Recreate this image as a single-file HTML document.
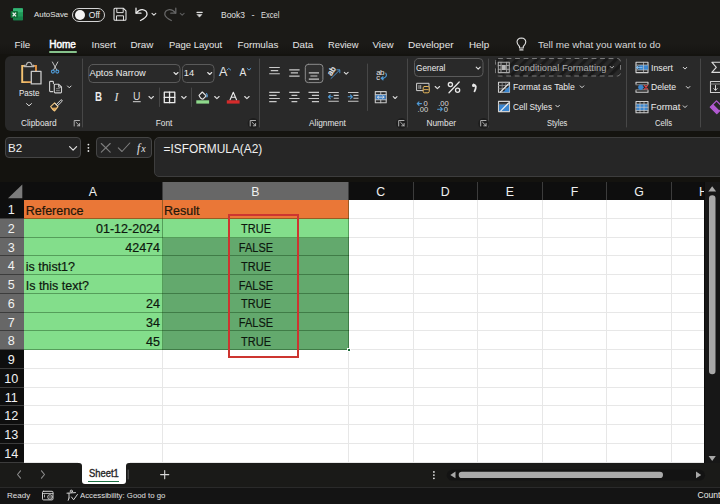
<!DOCTYPE html>
<html><head><meta charset="utf-8">
<style>
*{margin:0;padding:0;box-sizing:border-box}
html,body{width:720px;height:504px;overflow:hidden}
body{background:#14130f;font-family:"Liberation Sans",sans-serif;color:#e8e8e8;position:relative}
.a{position:absolute}
.t{position:absolute;line-height:1;white-space:nowrap}
#ribbon{position:absolute;left:5px;top:56px;width:730px;height:75px;background:#292929;border-radius:6px}
.sep{position:absolute;width:1px;background:#454545}
.lbl{position:absolute;line-height:1;white-space:nowrap;font-size:8.3px;color:#e6e6e6}
.rt{position:absolute;line-height:1;white-space:nowrap;font-size:9.3px;color:#ececec}
#grid{position:absolute;left:24px;top:200px;width:680px;height:263.5px;background:#fff;overflow:hidden}
.hdr{position:absolute;top:181.5px;height:18.5px;background:#0e0e0e}
.ch{position:absolute;top:0;height:18.5px;border-right:1px solid #3c3c3c;color:#f0f0f0;font-size:12.3px;text-align:center;line-height:21.2px;overflow:hidden}
.rh{position:absolute;left:0;width:24px;height:18.75px;color:#f2f2f2;font-size:12.6px;text-align:center;line-height:21.5px;background:#0e0e0e;border-bottom:1px solid #3c3c3c;padding-right:1.4px;overflow:hidden}
.cell{position:absolute;height:18.75px;font-size:12.6px;line-height:19px;color:#111;white-space:nowrap;overflow:hidden}
svg{position:absolute;overflow:visible}
.ct{font-size:12.5px;color:#0d170e;-webkit-text-stroke:0.2px #0d170e}
</style></head><body>

<!-- TITLE BAR -->
<div class="a" style="left:0;top:0;width:720px;height:54px;background:linear-gradient(#1b1a17 0,#1b1a17 44px,#161512 54px)"></div>
<svg style="left:0;top:0" width="30" height="30" viewBox="0 0 30 30">
<rect x="13" y="8.2" width="10" height="12" rx="1" fill="#1f9a58"/>
<rect x="13" y="8.2" width="10" height="4" rx="1" fill="#33b474"/>
<rect x="13" y="16.5" width="10" height="3.7" fill="#17824a"/>
<rect x="10.6" y="11" width="7.4" height="6.9" rx="1" fill="#0f7038"/>
<path d="M12.6 12.6L16 16.4M16 12.6L12.6 16.4" stroke="#f2f2f2" stroke-width="1.3"/>
</svg>
<div class="t" style="left:34px;top:11.3px;font-size:7.9px;color:#e6e6e6">AutoSave</div>
<div class="a" style="left:72px;top:7.5px;width:33px;height:14.5px;border:1.4px solid #d4d4d4;border-radius:8px;background:#1b1a17"></div>
<div class="a" style="left:74.5px;top:9.5px;width:10.5px;height:10.5px;border-radius:50%;background:#f4f4f4"></div>
<div class="t" style="left:88.8px;top:11px;font-size:8.5px;color:#ececec">Off</div>

<div class="t" style="left:221.3px;top:10px;font-size:9.4px;color:#e0e0e0;transform:scaleX(.9);transform-origin:0 0">Book3</div><div class="t" style="left:251.5px;top:10px;font-size:9.4px;color:#e0e0e0">-</div><div class="t" style="left:260.6px;top:10px;font-size:9.4px;color:#e0e0e0;transform:scaleX(.8);transform-origin:0 0">Excel</div>

<!-- TABS -->
<div class="t" style="left:14.5px;top:39.7px;font-size:9.8px;color:#e6e6e6">File</div>
<div class="t" style="left:49.2px;top:39.7px;font-size:10px;color:#fff;-webkit-text-stroke:0.45px #fff">Home</div>
<div class="a" style="left:49px;top:51.3px;width:28px;height:2px;background:#86c28b;border-radius:1px"></div>
<div class="t" style="left:91.5px;top:39.7px;font-size:9.8px;color:#e6e6e6">Insert</div>
<div class="t" style="left:130.5px;top:39.7px;font-size:9.8px;color:#e6e6e6">Draw</div>
<div class="t" style="left:168.5px;top:39.7px;font-size:9.8px;color:#e6e6e6;transform:scaleX(.965);transform-origin:0 0">Page Layout</div>
<div class="t" style="left:237.5px;top:39.7px;font-size:9.8px;color:#e6e6e6">Formulas</div>
<div class="t" style="left:292.5px;top:39.7px;font-size:9.8px;color:#e6e6e6">Data</div>
<div class="t" style="left:327.5px;top:39.7px;font-size:9.8px;color:#e6e6e6;transform:scaleX(.95);transform-origin:0 0">Review</div>
<div class="t" style="left:372.5px;top:39.7px;font-size:9.8px;color:#e6e6e6">View</div>
<div class="t" style="left:407.8px;top:39.7px;font-size:9.8px;color:#e6e6e6;transform:scaleX(1.02);transform-origin:0 0">Developer</div>
<div class="t" style="left:469px;top:39.7px;font-size:9.8px;color:#e6e6e6">Help</div>
<div class="t" style="left:538px;top:39.5px;font-size:9.95px;color:#d8d8d8">Tell me what you want to do</div>

<!-- RIBBON -->
<div id="ribbon"></div>
<!-- RIBBON CONTENT -->
<svg style="left:0;top:0" width="720" height="135" viewBox="0 0 720 135" fill="none" stroke-linecap="round" stroke-linejoin="round">
<!-- separators -->
<g stroke="#474747" stroke-width="1">
<line x1="82.5" y1="59" x2="82.5" y2="127"/>
<line x1="259.5" y1="59" x2="259.5" y2="127"/>
<line x1="159.5" y1="88" x2="159.5" y2="106.5"/>
<line x1="191.5" y1="88" x2="191.5" y2="106.5"/>
<line x1="367.5" y1="64" x2="367.5" y2="110.5"/>
<line x1="407.5" y1="59" x2="407.5" y2="127"/>
<line x1="488.5" y1="59" x2="488.5" y2="127"/>
<line x1="626.5" y1="59" x2="626.5" y2="127"/>
<line x1="700.5" y1="59" x2="700.5" y2="127"/>
</g>
<!-- Paste clipboard -->
<defs><linearGradient id="og" x1="0" y1="0" x2="1" y2="0"><stop offset="0" stop-color="#f4c372"/><stop offset="1" stop-color="#e0903e"/></linearGradient></defs>
<path d="M33 65.9H36V70.3M25 65.9H22.2V82.1H30.6" stroke="url(#og)" stroke-width="1.9" stroke-linecap="square" stroke-linejoin="miter"/>
<path d="M24.4 66.6H33.8V65.2H31.7Q31.4 62.2 29.05 62.2Q26.7 62.2 26.4 65.2H24.4Z" stroke="#b9b9b9" stroke-width="1.1" fill="#292929"/>
<rect x="31.3" y="71.4" width="9.7" height="12.5" stroke="#c8c8c8" stroke-width="1.3"/>
<path d="M26.5 103.6L29 105.8L31.5 103.6" stroke="#dcdcdc" stroke-width="1"/>
<!-- scissors -->
<path d="M52.4 62L56.6 69.8M57.8 62L53.6 69.8" stroke="#d6d6d6" stroke-width="0.9"/>
<circle cx="52.9" cy="71.6" r="1.5" stroke="#4f9ad6" stroke-width="1.1"/>
<circle cx="57.3" cy="71.6" r="1.5" stroke="#4f9ad6" stroke-width="1.1"/>
<!-- copy -->
<path d="M52.8 91.6H50.4Q49.6 91.6 49.6 90.8V82.2Q49.6 81.4 50.4 81.4H52.6Q53.4 81.4 53.4 82.2V83.6" stroke="#d0d0d0" stroke-width="1.1"/>
<path d="M55.1 84.3H58.8L61.5 87V92.1Q61.5 92.9 60.7 92.9H55.1Q54.3 92.9 54.3 92.1V85.1Q54.3 84.3 55.1 84.3Z" stroke="#d0d0d0" stroke-width="1.1"/>
<path d="M58.6 84.5V87.2H61.3" stroke="#d0d0d0" stroke-width="0.9"/>
<path d="M56.4 88.7H59.4M56.4 90.7H59.4" stroke="#a0a0a0" stroke-width="0.8"/>
<path d="M67.5 86L69.3 87.8L71.1 86" stroke="#dcdcdc" stroke-width="1"/>
<!-- format painter -->
<path d="M51.2 107.8L53.3 110.3Q54 111.4 55 110.5L57.6 107.6Z" fill="#d89f52"/>
<path d="M50.6 106.6L54.6 102.9L58 106.6L54.6 111Q52.3 109.7 50.6 106.6Z" stroke="#f0c47c" stroke-width="1.1"/>
<path d="M55.4 103.6L57.3 105.5M56.4 104.5L60.6 100.2Q61.4 99.5 62 100.1Q62.6 100.8 61.9 101.5L57.6 105.7" stroke="#e0e0e0" stroke-width="1"/>
<!-- dialog launchers -->
<circle cx="253.1" cy="123.4" r="5.4" fill="#1d1d1d"/>
<circle cx="401.6" cy="123.4" r="5.4" fill="#1d1d1d"/>
<circle cx="483.6" cy="123.4" r="5.4" fill="#1d1d1d"/>
<g stroke="#bdbdbd" stroke-width="0.9">
<path d="M74.2 126V120.5H79.5M76 122.2L79.6 125.8M79.6 123.5V125.8H77.3"/>
<path d="M250.2 126V120.5H255.5M252 122.2L255.6 125.8M255.6 123.5V125.8H253.3"/>
<path d="M398.7 126V120.5H404M400.5 122.2L404.1 125.8M404.1 123.5V125.8H401.8"/>
<path d="M480.7 126V120.5H486M482.5 122.2L486.1 125.8M486.1 123.5V125.8H483.8"/>
</g>
<!-- font boxes -->
<rect x="88.8" y="64.5" width="91.2" height="18" rx="4" stroke="#5a5a5a" stroke-width="1"/>
<rect x="182.5" y="64.5" width="31.5" height="18" rx="4" stroke="#5a5a5a" stroke-width="1"/>
<path d="M174 72.5L176 74.5L178 72.5M207.7 72.5L209.7 74.5L211.7 72.5" stroke="#e0e0e0" stroke-width="1.1"/>
<path d="M227 70L228.8 68.4L230.6 70" stroke="#5a9fd8" stroke-width="1"/>
<path d="M247.2 68.5L249 70.1L250.8 68.5" stroke="#5a9fd8" stroke-width="1"/>
<!-- B I U chevron -->
<path d="M149 96.5L151.2 98.7L153.4 96.5M181.7 96.5L183.9 98.7L186.1 96.5M214.7 96.5L216.9 98.7L219.1 96.5M244.7 96.5L246.9 98.7L249.1 96.5" stroke="#dcdcdc" stroke-width="1.1"/>
<path d="M133.3 101.7H140.3" stroke="#d8d8d8" stroke-width="1"/>
<!-- borders -->
<rect x="164.3" y="92.2" width="10.5" height="10.5" stroke="#ececec" stroke-width="1.3"/>
<path d="M169.55 92.2V102.7M164.3 97.45H174.8" stroke="#ececec" stroke-width="1.3"/>
<!-- fill -->
<path d="M199 95.3L202.3 92L206.2 95.9L203 99.2Q200.5 99.2 199 95.3Z" stroke="#e6e6e6" stroke-width="1.1"/>
<path d="M206.5 93.5Q208 96 206.8 97" stroke="#5a9fd8" stroke-width="1.1"/>
<rect x="196.3" y="100.3" width="12.8" height="3.3" fill="#8fd98c"/>
<!-- font color -->
<path d="M230 100L233.3 92.2L236.6 100M231.3 97.2H235.3" stroke="#ececec" stroke-width="1.1"/>
<rect x="226.8" y="100.3" width="12.8" height="3.3" fill="#d52b2b"/>
<!-- alignment row1 -->
<g stroke="#c9c9c9" stroke-width="1.15" stroke-linecap="butt">
<path d="M269.2 67.5H279.8M270.8 70.6H278.2M269.2 73.7H279.8"/>
<path d="M289.2 69.8H299.6M290.8 72.9H298M289.2 76.1H299.6"/>
<path d="M308.8 72.9H319M310.4 76H317.4M308.8 79.1H319"/>
<path d="M269.2 92.3H279.8M269.2 95.4H276.6M269.2 98.5H279.8M269.2 101.6H276.6"/>
<path d="M289.2 92.3H299.6M291.5 95.4H297.3M289.2 98.5H299.6M291.5 101.6H297.3"/>
<path d="M308.5 92.3H319M311.9 95.4H319M308.5 98.5H319M311.9 101.6H319"/>
<path d="M328.3 92.5H338.8M333.7 95.3H338.8M333.7 98.2H338.8M328.3 101.2H338.8"/>
<path d="M348 92.5H358.5M353.4 95.3H358.5M353.4 98.2H358.5M348 101.2H358.5"/>
</g>
<rect x="305.3" y="64.3" width="17.6" height="18.3" rx="3" stroke="#8c8c8c" stroke-width="1" fill="#2f2f2f"/>
<g stroke="#c9c9c9" stroke-width="1.15" stroke-linecap="butt"><path d="M308.8 72.9H319M310.4 76H317.4M308.8 79.1H319"/></g>
<path d="M332.5 96.8H328.6M330.3 95L328.4 96.8L330.3 98.6" stroke="#4f9ad6" stroke-width="1.1"/>
<path d="M348.2 96.8H352.2M350.5 95L352.4 96.8L350.5 98.6" stroke="#4f9ad6" stroke-width="1.1"/>
<!-- orientation -->
<text x="0" y="0" transform="translate(331.3 76.3) rotate(-57)" font-family="Liberation Sans" font-size="8" fill="#f0f0f0" stroke="#f0f0f0" stroke-width="0.25">ab</text>
<path d="M331 78.5L339.5 70.2M336.8 69.8H339.8V72.8" stroke="#4f9ad6" stroke-width="0.9"/>
<path d="M344.3 72.3L346.2 74.2L348.1 72.3M393.2 96.6L395.1 98.5L397 96.6" stroke="#dcdcdc" stroke-width="1.1"/>
<!-- wrap text -->
<text x="376.2" y="74.5" font-family="Liberation Sans" font-size="8" fill="#e4e4e4" letter-spacing="-0.6">ab</text>
<text x="376.3" y="79.6" font-family="Liberation Sans" font-size="7.5" fill="#e4e4e4">c</text>
<path d="M385.8 73.2Q387.8 76.5 383.5 78.3H381.3M383 76.8L381.2 78.3L383 79.8" stroke="#4f9ad6" stroke-width="1.2"/>
<!-- merge -->
<rect x="375.3" y="91.6" width="10.9" height="11.2" stroke="#c9c9c9" stroke-width="1.1"/>
<rect x="375.8" y="94.6" width="9.9" height="5.2" fill="#3b7dc4"/>
<path d="M375.3 94.6H386.2M375.3 99.8H386.2M380.75 91.6V94.6M380.75 99.8V102.8" stroke="#c9c9c9" stroke-width="0.9"/>
<path d="M377.5 97.2H384M378.8 96L377.5 97.2L378.8 98.4M382.7 96L384 97.2L382.7 98.4" stroke="#e8e8e8" stroke-width="0.8"/>
<!-- number box -->
<rect x="414.5" y="58.5" width="68.5" height="18" rx="4" stroke="#5a5a5a" stroke-width="1"/>
<path d="M476.2 67.2L478.2 69.2L480.2 67.2" stroke="#e0e0e0" stroke-width="1.1"/>
<!-- accounting -->
<rect x="417" y="83.3" width="12" height="7.3" stroke="#d0d0d0" stroke-width="1"/>
<rect x="423.2" y="86.5" width="6" height="6.3" rx="1.3" fill="#292929" stroke="#e9b85a" stroke-width="1"/>
<path d="M424.3 89.6H428.2" stroke="#e9b85a" stroke-width="0.9"/>
<path d="M419 85.5V88.5M420.7 85.5V88.5" stroke="#d0d0d0" stroke-width="0.8"/>
<path d="M435.2 86.5L437.4 88.7L439.6 86.5" stroke="#dcdcdc" stroke-width="1.1"/>
<!-- percent -->
<circle cx="450.4" cy="84.6" r="2.1" stroke="#e6e6e6" stroke-width="1.3"/>
<circle cx="457.6" cy="90.3" r="2.1" stroke="#e6e6e6" stroke-width="1.3"/>
<path d="M449 92.8L459.2 82" stroke="#e6e6e6" stroke-width="1.3"/>
<path d="M473.8 84.5Q477.5 85.5 474.5 91.3" stroke="#e6e6e6" stroke-width="1.8"/>
<circle cx="473.6" cy="85.4" r="1.6" fill="#e6e6e6"/>
<!-- inc/dec decimal -->
<path d="M421.5 103.6H417.3M419 101.8L417.2 103.6L419 105.4" stroke="#4f9ad6" stroke-width="1.1"/>
<path d="M437.6 109.2H442.2M440.6 107.5L442.3 109.2L440.6 110.9" stroke="#4f9ad6" stroke-width="1.1"/>
<text x="423.6" y="106.2" font-family="Liberation Sans" font-size="7.6" fill="#dadada">0</text>
<text x="417.6" y="112.2" font-family="Liberation Sans" font-size="7.6" fill="#dadada">.00</text>
<text x="438.2" y="106.2" font-family="Liberation Sans" font-size="7.6" fill="#dadada">.00</text>
<text x="443.8" y="112.2" font-family="Liberation Sans" font-size="7.6" fill="#dadada">0</text>
</svg>
<svg style="left:0;top:0" width="720" height="135" viewBox="0 0 720 135" fill="none" stroke-linecap="round" stroke-linejoin="round">
<defs>
<pattern id="hatch" patternUnits="userSpaceOnUse" width="7" height="7" patternTransform="rotate(45)">
<rect x="0" y="0" width="3.3" height="7" fill="#191919"/>
</pattern>
</defs>
<!-- conditional formatting -->
<rect x="495.5" y="58.5" width="125" height="17.5" rx="3" fill="url(#hatch)"/>
<rect x="495.5" y="58.5" width="125" height="17.5" rx="3" stroke="#7a7a7a" stroke-width="1" stroke-dasharray="4 4.5"/>
<rect x="498.3" y="62.3" width="11" height="10.3" fill="#2a2a2a" stroke="#a9a9a9" stroke-width="1.1"/>
<path d="M501 62.3V72.6M506.6 62.3V72.6M498.3 65.5H501M498.3 69.3H501M506.6 65.5H509.3M506.6 69.3H509.3" stroke="#a9a9a9" stroke-width="0.9"/>
<rect x="501.8" y="65" width="4" height="5" fill="#b5b5b5"/>
<path d="M610 66.3L611.8 68.1L613.6 66.3" stroke="#a9a9a9" stroke-width="1"/>
<!-- format as table -->
<rect x="498.5" y="82.2" width="11" height="10" stroke="#d0d0d0" stroke-width="1.1"/>
<path d="M498.5 85.5H509.5M498.5 88.8H509.5M502.2 82.2V92.2M505.8 82.2V92.2" stroke="#9a9a9a" stroke-width="0.7"/>
<path d="M503 92.2L509.5 86V92.2Z" fill="#3a86d0"/>
<path d="M500.5 91.8L508.5 83.8" stroke="#eeeeee" stroke-width="1.2"/>
<path d="M580.2 85.9L582 87.7L583.8 85.9" stroke="#dcdcdc" stroke-width="1"/>
<!-- cell styles -->
<rect x="498.5" y="101.4" width="11" height="10.2" stroke="#d0d0d0" stroke-width="1.1"/>
<path d="M499 104.2H509" stroke="#9a9a9a" stroke-width="0.8"/>
<path d="M499.1 104.6H509V111H499.1Z" fill="#3a86d0"/>
<path d="M500.8 110.8L508.5 103" stroke="#eeeeee" stroke-width="1.2"/>
<path d="M555.8 105.3L557.6 107.1L559.4 105.3" stroke="#dcdcdc" stroke-width="1"/>
<!-- insert -->
<rect x="636" y="62.3" width="12" height="10.3" stroke="#d0d0d0" stroke-width="1.1"/>
<rect x="639.2" y="65" width="8.8" height="5" fill="#3a86d0"/>
<path d="M636 65H648M636 70H648M643.5 62.3V72.6" stroke="#c0c0c0" stroke-width="0.7"/>
<path d="M642 67.5H636.5M638.3 65.8L636.5 67.5L638.3 69.2" stroke="#7db8ea" stroke-width="1.1"/>
<path d="M683.2 67.3L685 69.1L686.8 67.3" stroke="#dcdcdc" stroke-width="1"/>
<!-- delete -->
<path d="M636 82.3H648M636 92.3H648M636 82.3V84M636 90.6V92.3M648 82.3V84M648 90.6V92.3" stroke="#d0d0d0" stroke-width="1.1"/>
<path d="M636 84.8H648M636 89.8H648" stroke="#b0b0b0" stroke-width="0.7"/>
<circle cx="640.8" cy="87.3" r="2.4" fill="#3a86d0" stroke="#3a86d0" stroke-width="0.6"/>
<path d="M644.5 85.4L647.5 89.2M647.5 85.4L644.5 89.2" stroke="#e0464a" stroke-width="1.1"/>
<path d="M686.3 86.5L688.1 88.3L689.9 86.5" stroke="#dcdcdc" stroke-width="1"/>
<!-- format -->
<rect x="636" y="101.5" width="12" height="11.3" stroke="#d0d0d0" stroke-width="1.1"/>
<rect x="636.5" y="104" width="11" height="6.5" fill="#3a86d0"/>
<path d="M636 104H648M636 107.3H648M636 110.5H648M640 101.5V112.8M644 101.5V112.8" stroke="#c8c8c8" stroke-width="0.7"/>
<path d="M683.2 105.8L685 107.6L686.8 105.8" stroke="#dcdcdc" stroke-width="1"/>
<!-- sigma -->
<path d="M720 62.2H711.8L716.3 67.3L711.8 72.4H720" stroke="#dcdcdc" stroke-width="1.1"/>
<!-- fill -->
<rect x="710.5" y="81.5" width="12" height="11" stroke="#d0d0d0" stroke-width="1.1"/>
<path d="M710.5 84H722" stroke="#9a9a9a" stroke-width="0.9"/>
<path d="M715.5 85.5V90.2M713.8 88.6L715.5 90.3L717.2 88.6" stroke="#dcdcdc" stroke-width="1"/>
<!-- eraser -->
<path d="M710.3 107.1L716.5 100.9L723 107.4L716.8 113.6Z" stroke="#b25ad2" stroke-width="1.3"/>
<path d="M710.3 107.1L713.2 104.2L719.7 110.7L716.8 113.6Z" fill="#b25ad2"/>
</svg>
<!-- ribbon text -->
<div class="t" style="left:18.6px;top:89.2px;font-size:8.6px;color:#ececec;transform:scaleX(.93);transform-origin:0 0">Paste</div>
<div class="lbl" style="left:21px;top:118.9px">Clipboard</div>
<div class="lbl" style="left:155.8px;top:118.9px">Font</div>
<div class="lbl" style="left:309px;top:118.9px">Alignment</div>
<div class="lbl" style="left:426.5px;top:118.9px">Number</div>
<div class="lbl" style="left:546.8px;top:118.9px;transform:scaleX(.9);transform-origin:0 0">Styles</div>
<div class="lbl" style="left:654.8px;top:118.9px;transform:scaleX(.93);transform-origin:0 0">Cells</div>
<div class="rt" style="left:89.5px;top:69.3px">Aptos Narrow</div>
<div class="rt" style="left:183.8px;top:69.3px">14</div>
<div class="t" style="left:219px;top:66px;font-size:12.5px;color:#e6e6e6">A</div>
<div class="t" style="left:239.5px;top:68.3px;font-size:10.2px;color:#e6e6e6">A</div>
<div class="t" style="left:94.6px;top:90.7px;font-size:12.2px;color:#ececec;font-weight:bold;transform:scaleX(.8);transform-origin:0 0">B</div>
<div class="t" style="left:114.3px;top:90px;font-size:13px;color:#d9d9d9;font-style:italic;font-family:'Liberation Serif',serif">I</div>
<div class="t" style="left:133px;top:91.8px;font-size:10.3px;color:#d9d9d9">U</div>
<div class="rt" style="left:415.8px;top:63.8px;transform:scaleX(.89);transform-origin:0 0">General</div>
<div class="rt" style="left:512.8px;top:63.7px;color:#b0b0b0">Conditional Formatting</div>
<div class="rt" style="left:512.8px;top:83.2px;transform:scaleX(.93);transform-origin:0 0">Format as Table</div>
<div class="rt" style="left:512.8px;top:102.9px;transform:scaleX(.89);transform-origin:0 0">Cell Styles</div>
<div class="rt" style="left:650.8px;top:63.8px;transform:scaleX(.94);transform-origin:0 0">Insert</div>
<div class="rt" style="left:650.8px;top:83.3px;transform:scaleX(.93);transform-origin:0 0">Delete</div>
<div class="rt" style="left:650.8px;top:102.5px">Format</div>


<!-- FORMULA BAR -->
<div class="a" style="left:4.5px;top:137px;width:76px;height:21px;border:1px solid #454545;border-radius:4px;background:#242424"></div>
<div class="t" style="left:8px;top:141.8px;font-size:11.6px;color:#f0f0f0">B2</div>
<div class="a" style="left:96px;top:137px;width:55.5px;height:21px;border:1px solid #454545;border-radius:4px;background:#242424"></div>
<div class="a" style="left:154px;top:137px;width:600px;height:40px;border:1px solid #3d3d3d;border-radius:5px;background:#262626"></div>
<div class="t" style="left:163.5px;top:143.5px;font-size:11.9px;color:#f0f0f0">=ISFORMULA(A2)</div>

<!-- HEADERS -->
<div class="hdr" style="left:0;width:704px">
<div class="ch" style="left:24px;width:138.5px;background:#0e0e0e">A</div>
<div class="ch" style="left:162.5px;width:186.5px;background:#676767">B</div>
<div class="ch" style="left:349px;width:64.5px;background:#0e0e0e">C</div>
<div class="ch" style="left:413.5px;width:64.5px;background:#0e0e0e">D</div>
<div class="ch" style="left:478px;width:64.8px;background:#0e0e0e">E</div>
<div class="ch" style="left:542.8px;width:64.5px;background:#0e0e0e">F</div>
<div class="ch" style="left:607.3px;width:64.4px;background:#0e0e0e">G</div>
<div class="ch" style="left:671.7px;width:64.4px;background:#0e0e0e">H</div>

</div>
<div class="a" style="left:0;top:200px;width:24px;height:263.5px">
<div class="rh" style="top:0.00px;background:#0e0e0e">1</div>
<div class="rh" style="top:18.75px;background:#676767">2</div>
<div class="rh" style="top:37.50px;background:#676767">3</div>
<div class="rh" style="top:56.25px;background:#676767">4</div>
<div class="rh" style="top:75.00px;background:#676767">5</div>
<div class="rh" style="top:93.75px;background:#676767">6</div>
<div class="rh" style="top:112.50px;background:#676767">7</div>
<div class="rh" style="top:131.25px;background:#676767">8</div>
<div class="rh" style="top:150.00px;background:#0e0e0e">9</div>
<div class="rh" style="top:168.75px;background:#0e0e0e">10</div>
<div class="rh" style="top:187.50px;background:#0e0e0e">11</div>
<div class="rh" style="top:206.25px;background:#0e0e0e">12</div>
<div class="rh" style="top:225.00px;background:#0e0e0e">13</div>
<div class="rh" style="top:243.75px;background:#0e0e0e">14</div>
</div>

<!-- GRID -->
<div class="a" style="left:704px;top:181.5px;width:16px;height:306px;background:#171717;border-left:1.5px solid #0c0c0c"></div>
<div id="grid"></div>

<div class="a" style="left:162px;top:200px;width:1px;height:263.5px;background:#e7e7e7"></div>
<div class="a" style="left:348.0px;top:200px;width:1px;height:263.5px;background:#e7e7e7"></div>
<div class="a" style="left:412.5px;top:200px;width:1px;height:263.5px;background:#e7e7e7"></div>
<div class="a" style="left:477.0px;top:200px;width:1px;height:263.5px;background:#e7e7e7"></div>
<div class="a" style="left:541.8px;top:200px;width:1px;height:263.5px;background:#e7e7e7"></div>
<div class="a" style="left:606.3px;top:200px;width:1px;height:263.5px;background:#e7e7e7"></div>
<div class="a" style="left:670.7px;top:200px;width:1px;height:263.5px;background:#e7e7e7"></div>
<div class="a" style="left:735.1px;top:200px;width:1px;height:263.5px;background:#e7e7e7"></div>
<div class="a" style="left:24px;top:217.75px;width:680px;height:1px;background:#e7e7e7"></div>
<div class="a" style="left:24px;top:236.50px;width:680px;height:1px;background:#e7e7e7"></div>
<div class="a" style="left:24px;top:255.25px;width:680px;height:1px;background:#e7e7e7"></div>
<div class="a" style="left:24px;top:274.00px;width:680px;height:1px;background:#e7e7e7"></div>
<div class="a" style="left:24px;top:292.75px;width:680px;height:1px;background:#e7e7e7"></div>
<div class="a" style="left:24px;top:311.50px;width:680px;height:1px;background:#e7e7e7"></div>
<div class="a" style="left:24px;top:330.25px;width:680px;height:1px;background:#e7e7e7"></div>
<div class="a" style="left:24px;top:349.00px;width:680px;height:1px;background:#e7e7e7"></div>
<div class="a" style="left:24px;top:367.75px;width:680px;height:1px;background:#e7e7e7"></div>
<div class="a" style="left:24px;top:386.50px;width:680px;height:1px;background:#e7e7e7"></div>
<div class="a" style="left:24px;top:405.25px;width:680px;height:1px;background:#e7e7e7"></div>
<div class="a" style="left:24px;top:424.00px;width:680px;height:1px;background:#e7e7e7"></div>
<div class="a" style="left:24px;top:442.75px;width:680px;height:1px;background:#e7e7e7"></div>
<div class="a" style="left:24px;top:461.50px;width:680px;height:1px;background:#e7e7e7"></div>
<div class="a" style="left:24px;top:200px;width:325px;height:18.75px;background:#ea7737"></div>
<div class="a" style="left:24px;top:218.75px;width:139px;height:18.75px;background:#83de8b"></div>
<div class="a" style="left:24px;top:237.50px;width:139px;height:18.75px;background:#83de8b"></div>
<div class="a" style="left:24px;top:256.25px;width:139px;height:18.75px;background:#83de8b"></div>
<div class="a" style="left:24px;top:275.00px;width:139px;height:18.75px;background:#83de8b"></div>
<div class="a" style="left:24px;top:293.75px;width:139px;height:18.75px;background:#83de8b"></div>
<div class="a" style="left:24px;top:312.50px;width:139px;height:18.75px;background:#83de8b"></div>
<div class="a" style="left:24px;top:331.25px;width:139px;height:18.75px;background:#83de8b"></div>
<div class="a" style="left:163px;top:218.75px;width:186px;height:18.75px;background:#83de8b"></div>
<div class="a" style="left:163px;top:237.50px;width:186px;height:112.50px;background:#63a96d"></div>
<div class="a" style="left:24px;top:217.75px;width:325px;height:1px;background:rgba(0,40,0,.35)"></div>
<div class="a" style="left:24px;top:236.50px;width:325px;height:1px;background:rgba(0,40,0,.35)"></div>
<div class="a" style="left:24px;top:255.25px;width:325px;height:1px;background:rgba(0,40,0,.35)"></div>
<div class="a" style="left:24px;top:274.00px;width:325px;height:1px;background:rgba(0,40,0,.35)"></div>
<div class="a" style="left:24px;top:292.75px;width:325px;height:1px;background:rgba(0,40,0,.35)"></div>
<div class="a" style="left:24px;top:311.50px;width:325px;height:1px;background:rgba(0,40,0,.35)"></div>
<div class="a" style="left:24px;top:330.25px;width:325px;height:1px;background:rgba(0,40,0,.35)"></div>
<div class="a" style="left:24px;top:349.00px;width:325px;height:1px;background:rgba(0,40,0,.35)"></div>
<div class="a" style="left:162px;top:200px;width:1px;height:150px;background:rgba(0,40,0,.35)"></div>
<div class="a" style="left:348px;top:200px;width:1px;height:150px;background:rgba(0,40,0,.35)"></div>
<div class="t ct" style="left:25.7px;top:204.55px;color:#2b1608">Reference</div>
<div class="t ct" style="left:164px;top:204.55px;color:#2b1608">Result</div>
<div class="t ct" style="right:560px;top:223.30px;">01-12-2024</div>
<div class="t ct" style="right:560px;top:242.05px;">42474</div>
<div class="t ct" style="left:25.7px;top:260.80px;">is thist1?</div>
<div class="t ct" style="left:25.7px;top:279.55px;">Is this text?</div>
<div class="t ct" style="right:560px;top:298.30px;">24</div>
<div class="t ct" style="right:560px;top:317.05px;">34</div>
<div class="t ct" style="right:560px;top:335.80px;">45</div>
<div class="t ct" style="left:205.7px;width:100px;text-align:center;top:223.30px;transform:scaleX(.88)">TRUE</div>
<div class="t ct" style="left:205.7px;width:100px;text-align:center;top:242.05px;transform:scaleX(.88)">FALSE</div>
<div class="t ct" style="left:205.7px;width:100px;text-align:center;top:260.80px;transform:scaleX(.88)">TRUE</div>
<div class="t ct" style="left:205.7px;width:100px;text-align:center;top:279.55px;transform:scaleX(.88)">FALSE</div>
<div class="t ct" style="left:205.7px;width:100px;text-align:center;top:298.30px;transform:scaleX(.88)">TRUE</div>
<div class="t ct" style="left:205.7px;width:100px;text-align:center;top:317.05px;transform:scaleX(.88)">FALSE</div>
<div class="t ct" style="left:205.7px;width:100px;text-align:center;top:335.80px;transform:scaleX(.88)">TRUE</div>
<div class="a" style="left:228.4px;top:213.8px;width:70.4px;height:144.2px;border:2.3px solid #cd3530"></div>
<div class="a" style="left:346.5px;top:347.5px;width:4px;height:4px;background:#1e6b3a;border:1px solid #fff"></div>

<!-- SHEET TABS -->
<div class="a" style="left:78px;top:461.8px;width:52px;height:5px;background:#fff"></div>
<div class="a" style="left:0;top:463px;width:82px;height:24px;background:#1a1a18;border-top-right-radius:3px"></div>
<div class="a" style="left:126px;top:463px;width:594px;height:24px;background:#1a1a18;border-top-left-radius:3px"></div>
<div class="a" style="left:78px;top:470px;width:52px;height:17px;background:#1a1a18"></div>
<div class="a" style="left:82px;top:462px;width:44px;height:22.3px;background:#fff;border-radius:0 0 3px 3px"></div>
<div class="t" style="left:88.6px;top:468.5px;font-size:10px;color:#262626;-webkit-text-stroke:0.35px #262626;transform:scaleX(.94);transform-origin:0 0">Sheet1</div>
<div class="a" style="left:88px;top:480.5px;width:31px;height:1.6px;background:#1e7145"></div>

<!-- STATUS BAR -->
<div class="a" style="left:0;top:487px;width:720px;height:17px;background:#141414;border-top:1px solid #2a2a2a"></div>
<div class="t" style="left:7px;top:491.5px;font-size:8px;color:#e0e0e0">Ready</div>
<div class="t" style="left:79.5px;top:491.5px;font-size:8px;color:#e0e0e0;transform:scaleX(.975);transform-origin:0 0">Accessibility: Good to go</div>
<div class="t" style="left:697.5px;top:491px;font-size:8.6px;color:#e8e8e8">Count</div>

<svg style="left:0;top:0" width="720" height="504" viewBox="0 0 720 504" fill="none" stroke-linecap="round" stroke-linejoin="round">
<!-- save -->
<path d="M115.5 8.3H123.5L126 10.8V19.3Q126 20.3 125 20.3H115Q114 20.3 114 19.3V9.3Q114 8.3 115 8.3Z" stroke="#e8e8e8" stroke-width="1.05"/>
<path d="M116.8 8.5V12.6H123.2V8.5M116.5 20.2V15.8H123.5V20.2" stroke="#e8e8e8" stroke-width="0.95"/>
<!-- undo -->
<path d="M136 8.2V13.2H141" stroke="#ececec" stroke-width="1.3"/>
<path d="M136.3 13Q139 9.3 142.5 9.6Q147.2 10.3 147 14.5Q146.5 17.5 140.5 20.5" stroke="#ececec" stroke-width="1.3"/>
<path d="M152 13.3L153.9 15.2L155.8 13.3" stroke="#dcdcdc" stroke-width="1.1"/>
<!-- redo -->
<path d="M175.8 8.2V13.2H170.8" stroke="#666" stroke-width="1.3"/>
<path d="M175.5 13Q172.8 9.3 169.3 9.6Q164.6 10.3 164.8 14.5Q165.3 17.5 171.3 20.5" stroke="#666" stroke-width="1.3"/>
<path d="M180.3 13.3L182.2 15.2L184.1 13.3" stroke="#5a5a5a" stroke-width="1.1"/>
<!-- customize -->
<path d="M197 12.4H202.2" stroke="#e0e0e0" stroke-width="1.1"/>
<path d="M197.3 14.4H201.9L199.6 16.9Z" fill="#e0e0e0" stroke="#e0e0e0" stroke-width="0.6"/>
<!-- lightbulb -->
<path d="M519.5 46.5Q517 44.3 517 41.8Q517.3 38.2 521.4 38Q525.5 38.2 525.8 41.8Q525.8 44.3 523.3 46.5V48H519.5Z" stroke="#e0e0e0" stroke-width="1.1"/>
<path d="M519.8 49.9H523" stroke="#e0e0e0" stroke-width="1.1"/>
<!-- excel logo -->
<!-- formula bar -->
<path d="M69.6 146.6L73.1 150.1L76.6 146.6" stroke="#e0e0e0" stroke-width="1.2"/>
<circle cx="88.4" cy="144.6" r="0.9" fill="#e8e8e8"/>
<circle cx="88.4" cy="147.8" r="0.9" fill="#e8e8e8"/>
<circle cx="88.4" cy="151" r="0.9" fill="#e8e8e8"/>
<path d="M101.3 143.5L110.2 152.2M110.2 143.5L101.3 152.2" stroke="#7e7e7e" stroke-width="1.1"/>
<path d="M118.3 147.8L122 151.5L129.8 143" stroke="#7e7e7e" stroke-width="1.1"/>
<text x="137" y="152" font-family="Liberation Serif" font-style="italic" font-size="11.5" fill="#e4e4e4">f</text>
<text x="141.2" y="151.6" font-family="Liberation Serif" font-style="italic" font-size="10" fill="#e4e4e4">x</text>
<!-- corner triangle -->
<path d="M8 198.3L22.3 184.6V198.3Z" fill="#7b7b7b"/>
<!-- vertical scrollbar -->
<path d="M708.3 191.5L712.2 186.3L716.1 191.5Z" fill="#a8a8a8"/>
<rect x="709" y="195.3" width="6.5" height="179" rx="3.2" fill="#a9a9a9"/>
<path d="M708.6 456L712.2 461L715.8 456Z" fill="#a8a8a8"/>
<!-- horizontal scrollbar -->
<rect x="446.7" y="469.8" width="258.3" height="10.8" rx="5.4" fill="#131313"/>
<path d="M455.5 471.6L450.3 474.9L455.5 478.2Z" fill="#a8a8a8"/>
<rect x="458.7" y="471.8" width="204.3" height="6.3" rx="3.1" fill="#a9a9a9"/>
<path d="M696 471.6L701.2 474.9L696 478.2Z" fill="#a8a8a8"/>
<circle cx="433.9" cy="471.9" r="0.9" fill="#e8e8e8"/>
<circle cx="433.9" cy="475.1" r="0.9" fill="#e8e8e8"/>
<circle cx="433.9" cy="478.3" r="0.9" fill="#e8e8e8"/>
<!-- sheet nav -->
<path d="M20.5 470.8L17.5 474.5L20.5 478.2" stroke="#8a8a8a" stroke-width="1.1"/>
<path d="M41.5 470.8L44.5 474.5L41.5 478.2" stroke="#8a8a8a" stroke-width="1.1"/>
<path d="M128.2 470V479" stroke="#5a5a5a" stroke-width="1"/>
<path d="M160.6 474.6H168.8M164.7 470.5V478.7" stroke="#d8d8d8" stroke-width="1.1"/>
<!-- status icons -->
<rect x="42.5" y="491.3" width="10.5" height="8.6" rx="1" stroke="#d0d0d0" stroke-width="1"/>
<path d="M42.5 493.5H53M44.5 495V497" stroke="#d0d0d0" stroke-width="0.8"/>
<circle cx="50" cy="497" r="2.3" fill="#141414" stroke="#d0d0d0" stroke-width="0.9"/>
<circle cx="50" cy="497" r="0.7" fill="#d0d0d0"/>
<circle cx="71.3" cy="491.2" r="1.1" stroke="#dcdcdc" stroke-width="0.9"/>
<path d="M67 493.2L75.5 492.6M69 493.3V498M69 498L68.2 500.3M71.5 497L73.6 499.8L77.4 494.5" stroke="#dcdcdc" stroke-width="0.95"/>
</svg>

</body></html>
